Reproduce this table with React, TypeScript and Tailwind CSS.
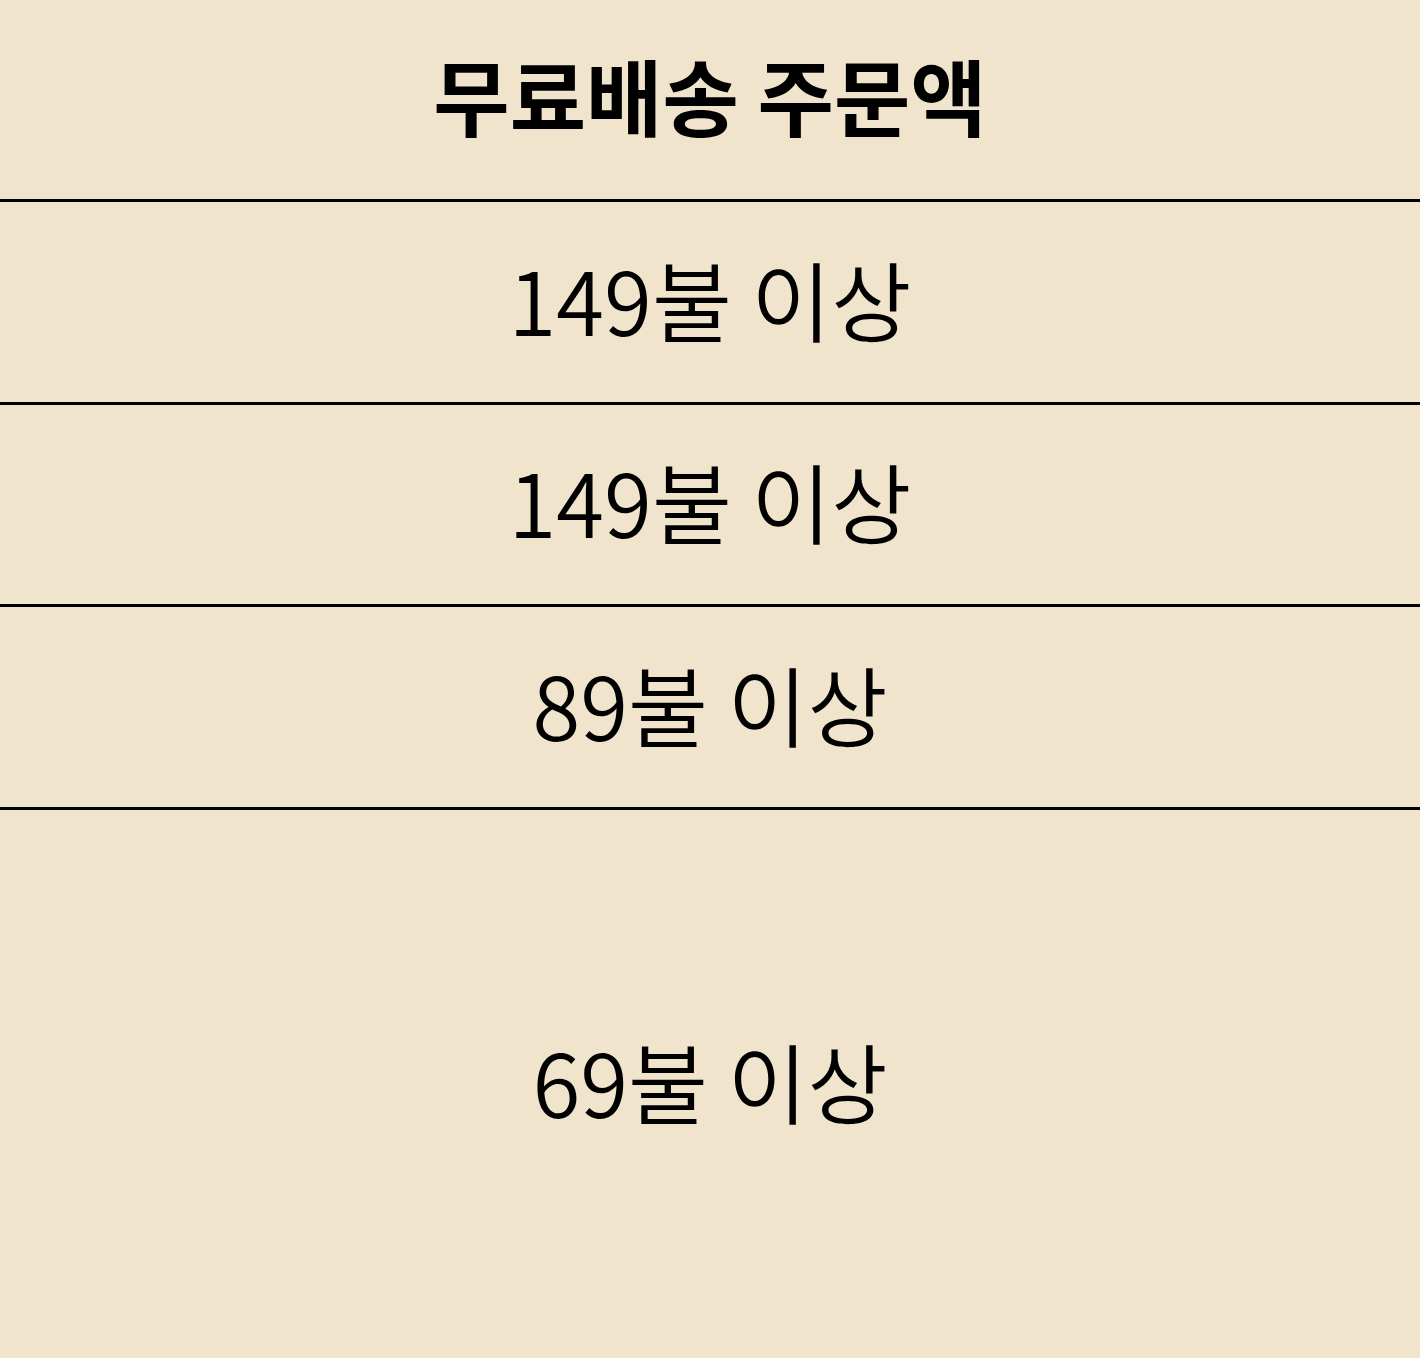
const rows = [
  { label: "149불 이상", h: "h-[203px]" },
  { label: "149불 이상", h: "h-[202px]" },
  { label: "89불 이상", h: "h-[203px]" },
];

export default function App() {
  return (
    <div
      className="flex h-[1358px] w-full flex-col bg-[#f0e5cc] text-black"
      style={{ fontFamily: '"Noto Sans CJK KR", "Noto Sans", sans-serif' }}
    >
      {/* Header */}
      <div className="flex h-[199px] items-center justify-center pb-[10px]">
        <h1 className="text-[83px] font-bold leading-none">무료배송 주문액</h1>
      </div>

      {rows.map((r, i) => (
        <div
          key={i}
          className={`flex ${r.h} items-center justify-center border-t-[3px] border-black pb-[8px]`}
        >
          <span className="text-[87px] font-[350] leading-none">{r.label}</span>
        </div>
      ))}

      <div className="flex flex-1 items-center justify-center border-t-[3px] border-black pb-[8px]">
        <span className="text-[87px] font-[350] leading-none">69불 이상</span>
      </div>
    </div>
  );
}
